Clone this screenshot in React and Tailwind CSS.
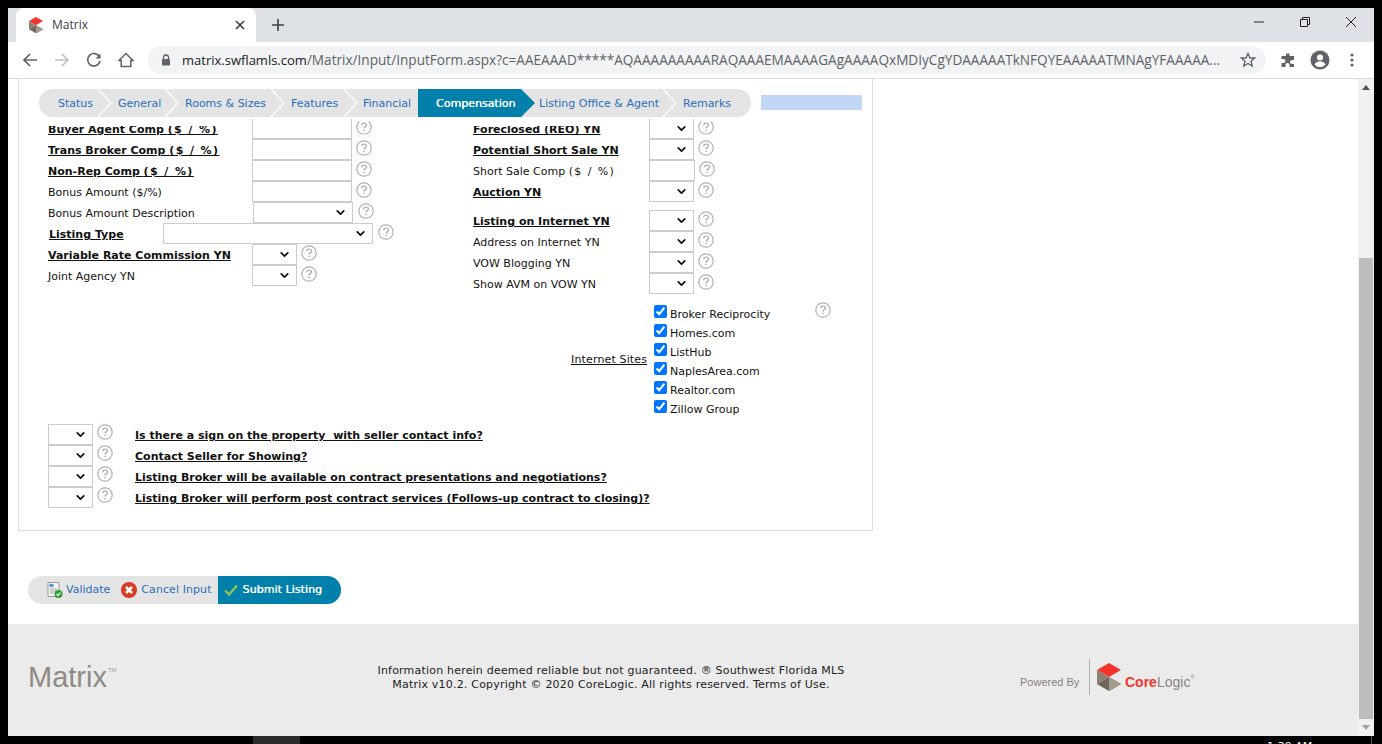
import { ChevronDown } from 'lucide-react';

const font = "font-['DejaVu_Sans',Verdana,sans-serif]";

function Help({ className = '' }) {
  return (
    <svg width="16" height="16" viewBox="0 0 16 16" className={`shrink-0 ${className}`}>
      <circle cx="8" cy="8" r="7.2" fill="#fff" stroke="#b5b0aa" strokeWidth="1.2" />
      <path d="M5.7 6.2c.1-1.4 1.1-2.2 2.4-2.2 1.3 0 2.3.8 2.3 2 0 1.9-2.4 1.8-2.4 3.6" fill="none" stroke="#a9a49e" strokeWidth="1.2" />
      <rect x="7.4" y="10.8" width="1.3" height="1.4" fill="#a9a49e" />
    </svg>
  );
}

function Sel({ w = 'w-[45px]', h = 'h-[21px]' }) {
  return (
    <div className={`${w} ${h} shrink-0 border border-[#ccc] bg-white flex items-center justify-end pr-[5px]`}>
      <ChevronDown size={13} strokeWidth={3.2} color="#111" />
    </div>
  );
}

function Box({ w = 'w-[100px]' }) {
  return <div className={`${w} h-[21px] shrink-0 border border-[#ccc] bg-white`}></div>;
}

function Label({ children, bold, w, clipped }) {
  return (
    <span className={`${w} shrink-0 pt-[2px] text-[11px] leading-[21px] whitespace-nowrap text-[#111] ${bold ? 'font-bold underline' : ''} ${clipped ? '[clip-path:inset(9px_0_0_0)]' : ''}`}>
      {children}
    </span>
  );
}

function Row({ label, bold, w, field, helpMl = 'ml-[4px]', pad = '', clipped }) {
  return (
    <div className={`flex h-[21px] items-center ${pad}`}>
      <Label bold={bold} w={w} clipped={clipped}>{label}</Label>
      {field}
      <Help className={`${helpMl} -mt-[4px] ${clipped ? '[clip-path:inset(3px_0_0_0)]' : ''}`} />
    </div>
  );
}

// the percent part runs wider in the original font
function Pct() {
  return <span className="tracking-[1.4px]">($ / %)</span>;
}

const steps = [
  { name: 'Status', w: 'w-[60px]', pl: 'pl-[19px]' },
  { name: 'General', w: 'w-[67px]', pl: 'pl-[19px]' },
  { name: 'Rooms & Sizes', w: 'w-[106px]', pl: 'pl-[19px]' },
  { name: 'Features', w: 'w-[73px]', pl: 'pl-[19px]' },
  { name: 'Financial', w: 'w-[72px]', pl: 'pl-[18px]' },
];

function Chevron() {
  return (
    <svg width="14" height="28" viewBox="0 0 14 28" className="absolute top-0 right-[-13px]">
      <path d="M0 0L13 14L0 28" fill="none" stroke="#fff" strokeWidth="1.2" />
    </svg>
  );
}

function StepNav() {
  return (
    <div className="flex items-center ml-[20px] relative z-10">
      <div className="flex h-[28px] w-[712px] rounded-full bg-[#e4e4e4] text-[11px] leading-[29px] text-[#2a6ebb]">
        {steps.map((s) => (
          <div key={s.name} className={`relative ${s.w} ${s.pl} shrink-0 whitespace-nowrap`}>
            {s.name}
            <Chevron />
          </div>
        ))}
        <div className="relative w-[103px] shrink-0 bg-[#0080ab] pl-[18px] ml-[1px] text-white whitespace-nowrap [text-shadow:0.3px_0_0_#fff]">
          Compensation
          <svg width="14" height="28" viewBox="0 0 14 28" className="absolute top-0 right-[-14px]">
            <path d="M0 0L14 14L0 28Z" fill="#0080ab" />
          </svg>
        </div>
        <div className="relative w-[143px] shrink-0 pl-[18px] whitespace-nowrap">
          Listing Office &amp; Agent
          <Chevron />
        </div>
        <div className="pl-[19px] whitespace-nowrap">Remarks</div>
      </div>
      <div className="ml-[10px] -mt-px h-[15px] w-[101px] bg-[#c2d7f5]"></div>
    </div>
  );
}

function CoreLogicMark({ size = 24 }) {
  return (
    <svg width={size} height={size * 1.17} viewBox="0 0 24 28">
      <path d="M12 0L24 7L12 14L0 7Z" fill="#f5332b" />
      <path d="M0 7L12 14L0 21Z" fill="#8d8175" />
      <path d="M0 21L12 14L24 21L12 28Z" fill="#6f655a" />
      <path d="M12 14L24 21L12 28Z" fill="#a39a90" />
    </svg>
  );
}

const sites = ['Broker Reciprocity', 'Homes.com', 'ListHub', 'NaplesArea.com', 'Realtor.com', 'Zillow Group'];

const questions = [
  'Is there a sign on the property\u00a0 with seller contact info?',
  'Contact Seller for Showing?',
  'Listing Broker will be available on contract presentations and negotiations?',
  'Listing Broker will perform post contract services (Follows-up contract to closing)?',
];

function FormBody() {
  return (
    <div className="h-[410px] overflow-hidden mt-[2px]">
      <div className="-mt-[1px] pl-[29px] flex">
        <div className="w-[425px]">
          <Row label={<>Buyer Agent Comp <Pct /></>} bold clipped w="w-[204px]" field={<Box />} />
          <Row label={<>Trans Broker Comp <Pct /></>} bold w="w-[204px]" field={<Box />} />
          <Row label={<>Non-Rep Comp <Pct /></>} bold w="w-[204px]" field={<Box />} />
          <Row label="Bonus Amount ($/%)" w="w-[204px]" field={<Box />} />
          <Row label="Bonus Amount Description" w="w-[205px]" field={<Sel w="w-[100px]" />} helpMl="ml-[5px]" />
          <Row label="Listing Type" bold w="w-[114px]" pad="pl-[1px]" field={<Sel w="w-[210px]" />} helpMl="ml-[5px]" />
          <Row label="Variable Rate Commission YN" bold w="w-[204px]" field={<Sel />} />
          <Row label="Joint Agency YN" w="w-[204px]" field={<Sel />} />
        </div>
        <div>
          <Row label="Foreclosed (REO) YN" bold clipped w="w-[176px]" field={<Sel />} />
          <Row label="Potential Short Sale YN" bold w="w-[176px]" field={<Sel />} />
          <Row label={<>Short Sale Comp <Pct /></>} w="w-[176px]" field={<Box w="w-[46px]" />} />
          <Row label="Auction YN" bold w="w-[176px]" field={<Sel />} />
          <div className="h-[8px]"></div>
          <Row label="Listing on Internet YN" bold w="w-[176px]" field={<Sel />} />
          <Row label="Address on Internet YN" w="w-[176px]" field={<Sel />} />
          <Row label="VOW Blogging YN" w="w-[176px]" field={<Sel />} />
          <Row label="Show AVM on VOW YN" w="w-[176px]" field={<Sel />} />
        </div>
      </div>

      <div className="flex mt-[10px] ml-[552px]">
        <div className="self-center pb-[2px] text-[11px] underline text-[#111] whitespace-nowrap w-[83px] tracking-[0.15px]">Internet Sites</div>
        <div className="w-[161px]">
          {sites.map((s) => (
            <div key={s} className="flex h-[19px] items-center text-[11px] text-[#111] whitespace-nowrap">
              <input type="checkbox" checked readOnly className="w-[13px] h-[13px] mr-[3px] -mt-[4px] accent-[#0075ff]" />
              <span className="pt-[4px]">{s}</span>
            </div>
          ))}
        </div>
        <Help className="-mt-[2px]" />
      </div>

      <div className="mt-[6px] pl-[29px]">
        {questions.map((q) => (
          <div key={q} className="flex h-[21px] items-center">
            <Sel />
            <Help className="ml-[4px] -mt-[6px]" />
            <span className="ml-[22px] pt-[4px] text-[11px] font-bold underline text-[#111] whitespace-pre">{q}</span>
          </div>
        ))}
      </div>
    </div>
  );
}

function ButtonBar() {
  return (
    <div className="flex h-[28px] w-[313px] ml-[20px] mt-[45px] rounded-full overflow-hidden bg-[#e4e4e4] text-[11px] items-center text-[#2a6ebb]">
      <svg width="16" height="16" viewBox="0 0 16 16" className="ml-[19px]">
        <path d="M1 0.5H12V14.5H1Z" fill="#f4f4f4" stroke="#999" />
        <rect x="2.5" y="2" width="4" height="3" fill="#5b8fd6" />
        <path d="M3 7H10M3 9H10M3 11H7" stroke="#aaa" />
        <circle cx="11.5" cy="12" r="4" fill="#2f9e36" />
        <path d="M9.6 12l1.4 1.4 2.4-2.6" fill="none" stroke="#fff" strokeWidth="1.3" />
      </svg>
      <span className="ml-[3px]">Validate</span>
      <svg width="16" height="16" viewBox="0 0 16 16" className="ml-[11px]">
        <circle cx="8" cy="8" r="8" fill="#d83a22" />
        <path d="M5 5L11 11M11 5L5 11" stroke="#fff" strokeWidth="2.6" />
      </svg>
      <span className="ml-[4px] tracking-[0.08px]">Cancel Input</span>
      <div className="ml-[6px] flex h-full flex-1 items-center bg-[#0080ab] text-white">
        <svg width="14" height="12" viewBox="0 0 14 12" className="ml-[6px]">
          <path d="M1 6.5L5 10.5L13 1.5" fill="none" stroke="#8fc45a" strokeWidth="2.4" />
        </svg>
        <span className="ml-[5px] tracking-[0.05px] [text-shadow:0.3px_0_0_#fff]">Submit Listing</span>
      </div>
    </div>
  );
}

function Footer() {
  return (
    <div className="mt-[20px] flex h-[112px] items-center bg-[#ebebeb] text-[#555]">
      <div className="ml-[20px] w-[300px] flex items-start -mt-[5px]">
        <span className="font-['Liberation_Sans',Arial,sans-serif] text-[29px] leading-none text-[#8f8a84]">Matrix</span>
        <span className="font-['Liberation_Sans',Arial,sans-serif] text-[6px] text-[#a5a19c] leading-none ml-[1px] mt-[4px]">TM</span>
      </div>
      <div className="w-[566px] -mt-[4px] text-center text-[11px] leading-[14px] text-[#222] tracking-[0.2px]">
        <div>Information herein deemed reliable but not guaranteed. ® Southwest Florida MLS</div>
        <div>Matrix v10.2. Copyright © 2020 CoreLogic. All rights reserved. Terms of Use.</div>
      </div>
      <div className="ml-[126px] flex items-center -mt-[6px] font-['Liberation_Sans',Arial,sans-serif]">
        <span className="w-[69px] pt-[10px] text-[11px] text-[#8a837c] whitespace-nowrap">Powered By</span>
        <div className="w-[1px] h-[36px] bg-[#b5b0aa]"></div>
        <div className="ml-[7px]"><CoreLogicMark /></div>
        <span className="ml-[4px] pt-[10px] text-[14px] font-bold text-[#f5332b] leading-none">Core</span>
        <span className="pt-[10px] text-[14px] text-[#8a837c] leading-none">Logic</span>
        <span className="text-[5px] text-[#8a837c] leading-none">®</span>
      </div>
    </div>
  );
}

function Scrollbar() {
  return (
    <div className="w-[16px] shrink-0 bg-[#f1f1f1] flex flex-col items-center">
      <div className="h-[17px] flex items-center justify-center">
        <svg width="8" height="5" viewBox="0 0 8 5"><path d="M0 5L4 0L8 5Z" fill="#505050" /></svg>
      </div>
      <div className="mt-[162px] w-[14px] h-[461px] bg-[#bdbdbd]"></div>
      <div className="flex-1 flex items-center justify-center">
        <svg width="8" height="5" viewBox="0 0 8 5"><path d="M0 0L4 5L8 0Z" fill="#a3a3a3" /></svg>
      </div>
    </div>
  );
}

function BrowserChrome() {
  return (
    <>
      <div className="flex h-[34px] bg-[#dee1e6] font-['Open_Sans',sans-serif]">
        <div className="ml-[8px] mt-0 flex w-[240px] items-center rounded-t-[8px] bg-white">
          <div className="ml-[13px]"><CoreLogicMark size={14} /></div>
          <span className="ml-[9px] text-[12px] text-[#3c4043]">Matrix</span>
          <svg width="10" height="10" viewBox="0 0 10 10" className="ml-[147px]">
            <path d="M1 1L9 9M9 1L1 9" stroke="#3c4043" strokeWidth="1.6" />
          </svg>
        </div>
        <svg width="14" height="14" viewBox="0 0 14 14" className="ml-[15px] mt-[10px]">
          <path d="M7 1V13M1 7H13" stroke="#3c4043" strokeWidth="1.6" />
        </svg>
        <div className="ml-auto flex items-start">
          <svg width="12" height="12" viewBox="0 0 12 12" className="mt-[8px]"><path d="M1 6H11" stroke="#222" /></svg>
          <svg width="12" height="12" viewBox="0 0 12 12" className="ml-[34px] mt-[8px]">
            <path d="M1.5 3.5H8.5V10.5H1.5ZM3.5 3.5V1.5H10.5V8.5H8.5" fill="none" stroke="#222" />
          </svg>
          <svg width="12" height="12" viewBox="0 0 12 12" className="ml-[34px] mr-[17px] mt-[8px]">
            <path d="M1 1L11 11M11 1L1 11" stroke="#222" />
          </svg>
        </div>
      </div>
      <div className="flex h-[37px] items-center border-b border-[#dadce0] bg-white">
        <svg width="16" height="16" viewBox="0 0 16 16" className="ml-[14px]">
          <path d="M15 8H2M8 2L2 8L8 14" fill="none" stroke="#5f6368" strokeWidth="1.7" />
        </svg>
        <svg width="16" height="16" viewBox="0 0 16 16" className="ml-[16px]">
          <path d="M1 8H14M8 2L14 8L8 14" fill="none" stroke="#bdc1c6" strokeWidth="1.7" />
        </svg>
        <svg width="16" height="16" viewBox="0 0 16 16" className="ml-[16px]">
          <path d="M13.5 5A6.2 6.2 0 1 0 14 9" fill="none" stroke="#5f6368" strokeWidth="1.7" />
          <path d="M14.5 1.5V6.5H9.5Z" fill="#5f6368" />
        </svg>
        <svg width="16" height="16" viewBox="0 0 16 16" className="ml-[16px]">
          <path d="M1 8.5L8 1.5L15 8.5H12.8V14.5H3.2V8.5Z" fill="none" stroke="#5f6368" strokeWidth="1.5" />
        </svg>
        <div className="ml-[14px] flex h-[28px] w-[1118px] items-center rounded-full bg-[#f1f3f4] font-['Open_Sans',sans-serif]">
          <svg width="12" height="12" viewBox="0 0 12 12" className="ml-[12px] shrink-0">
            <path d="M3.5 5V3.5a2.5 2.5 0 0 1 5 0V5" fill="none" stroke="#5f6368" strokeWidth="1.3" />
            <rect x="2" y="5" width="8" height="6.5" rx="1" fill="#5f6368" />
          </svg>
          <span className="ml-[10px] w-[1040px] shrink-0 whitespace-nowrap text-[13.6px] text-[#5f6368]">
            <span className="text-[13px] text-[#202124]">matrix.swflamls.com</span>/Matrix/Input/InputForm.aspx?c=AAEAAAD*****AQAAAAAAAAARAQAAAEMAAAAGAgAAAAQxMDIyCgYDAAAAATkNFQYEAAAAATMNAgYFAAAAA...
          </span>
          <svg width="16" height="16" viewBox="0 0 16 16" className="ml-[18px] shrink-0">
            <path d="M8 1.5L10 6H14.7L11 9.2L12.2 14L8 11.4L3.8 14L5 9.2L1.3 6H6Z" fill="none" stroke="#5f6368" strokeWidth="1.3" />
          </svg>
        </div>
        <svg width="16" height="16" viewBox="0 0 16 16" className="ml-[14px]">
          <path d="M6 1.5h3.5V4H14v4h-2a2 2 0 0 0 0 4h2v3H9.5v-2a2 2 0 0 0-4 0v2H1.5v-4h2a2 2 0 0 0 0-4h-2V4H6Z" fill="#5f6368" />
        </svg>
        <svg width="20" height="20" viewBox="0 0 20 20" className="ml-[14px]">
          <circle cx="10" cy="10" r="9.5" fill="#5f6368" />
          <circle cx="10" cy="7.5" r="3" fill="#fff" />
          <path d="M4.5 14.5c1-2.5 3.2-3.2 5.5-3.2s4.5.7 5.5 3.2c-1.3 1.6-3.3 2.6-5.5 2.6s-4.2-1-5.5-2.6Z" fill="#fff" />
        </svg>
        <svg width="4" height="14" viewBox="0 0 4 14" className="ml-[20px]">
          <circle cx="2" cy="2" r="1.6" fill="#5f6368" />
          <circle cx="2" cy="7" r="1.6" fill="#5f6368" />
          <circle cx="2" cy="12" r="1.6" fill="#5f6368" />
        </svg>
      </div>
    </>
  );
}

export default function App() {
  return (
    <div className={`${font} h-[744px] w-[1382px] overflow-hidden bg-black pt-[8px]`}>
      <div className="mx-[8px] flex h-[728px] flex-col bg-white">
        <BrowserChrome />
        <div className="flex flex-1 overflow-hidden">
          <div className="flex-1">
            <div className="ml-[10px] h-[452px] w-[855px] border-x border-b border-[#ddd] pt-[10px]">
              <StepNav />
              <FormBody />
            </div>
            <ButtonBar />
            <Footer />
          </div>
          <Scrollbar />
        </div>
      </div>
      {/* bit of the desktop taskbar left under the window */}
      <div className="flex h-[8px] overflow-hidden">
        <div className="ml-[253px] h-[8px] w-[47px] bg-[#2b2b2b]"></div>
        <span className="ml-[967px] mt-[4px] text-[11px] leading-[14px] text-white whitespace-nowrap">1:39 AM</span>
        <div className="ml-[59px] h-[8px] w-[1px] bg-[#555]"></div>
      </div>
    </div>
  );
}
